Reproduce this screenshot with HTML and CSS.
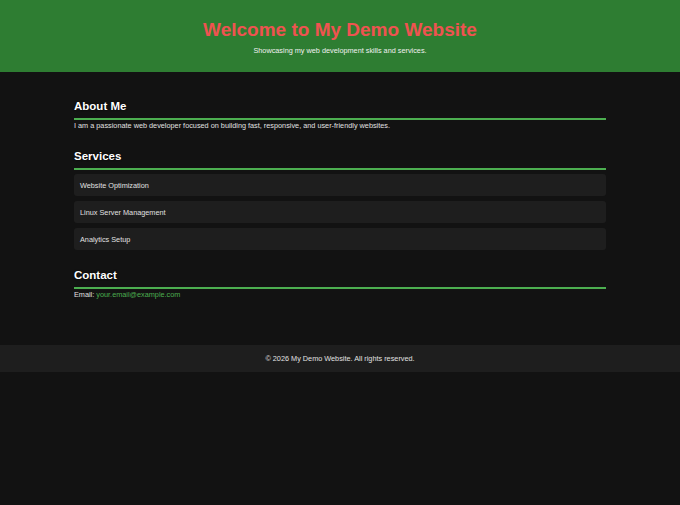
FILE: index.html
```html
<!DOCTYPE html>
<html lang="en">
<head>
<meta charset="utf-8">
<title>My Demo Website</title>
<link rel="stylesheet" href="styles.css">
</head>
<body>
<header class="site-header">
  <h1 class="site-title">Welcome to My Demo Website</h1>
  <p class="site-tagline">Showcasing my web development skills and services.</p>
</header>
<main class="content">
  <section class="section">
    <h2 class="section-title">About Me</h2>
    <p class="section-text">I am a passionate web developer focused on building fast, responsive, and user-friendly websites.</p>
  </section>
  <section class="section">
    <h2 class="section-title">Services</h2>
    <ul class="service-list">
      <li class="service-item">Website Optimization</li>
      <li class="service-item">Linux Server Management</li>
      <li class="service-item">Analytics Setup</li>
    </ul>
  </section>
  <section class="section">
    <h2 class="section-title">Contact</h2>
    <p class="section-text">Email: <a class="email-link" href="#">your.email@example.com</a></p>
  </section>
</main>
<footer class="site-footer">
  <p class="footer-text">&copy; 2026 My Demo Website. All rights reserved.</p>
</footer>
</body>
</html>
```
FILE: styles.css
```css
* { box-sizing: border-box; }
html, body { margin: 0; padding: 0; }
body {
  background: #121212;
  color: #e0e0e0;
  font-family: "Liberation Sans", Arial, sans-serif;
  font-size: 7.3px;
  min-height: 505px;
}
.site-header {
  background: #2e7d32;
  height: 72px;
  display: flex;
  flex-direction: column;
  align-items: center;
  padding-top: 18px;
}
.site-title {
  margin: 0;
  color: #ef5350;
  font-size: 19px;
  font-weight: bold;
  line-height: 23px;
}
.site-tagline {
  margin: 5px 0 0;
  font-size: 7.3px;
  color: #f0f0f0;
}
.content {
  width: 532px;
  margin: 0 auto;
  padding-top: 26px;
  padding-bottom: 45px;
  display: flex;
  flex-direction: column;
  gap: 17px;
}
.section-title {
  margin: 0;
  font-size: 11.5px;
  font-weight: bold;
  color: #ffffff;
  line-height: 16px;
  padding-bottom: 4px;
  border-bottom: 2px solid #4caf50;
  text-shadow: 0 0 2px #000;
}
.section-text {
  margin: 1px 0 0;
  line-height: 10px;
}
.service-list {
  list-style: none;
  margin: 4px 0 0;
  padding: 0;
  display: flex;
  flex-direction: column;
  gap: 5px;
}
.service-item {
  background: #1e1e1e;
  border-radius: 3px;
  height: 22px;
  padding: 0 6px;
  display: flex;
  align-items: center;
}
.email-link {
  color: #4caf50;
  text-decoration: none;
}
.site-footer {
  background: #1e1e1e;
  height: 27px;
  display: flex;
  align-items: center;
  justify-content: center;
}
.footer-text {
  margin: 0;
  font-size: 7.3px;
  color: #e0e0e0;
}
```
